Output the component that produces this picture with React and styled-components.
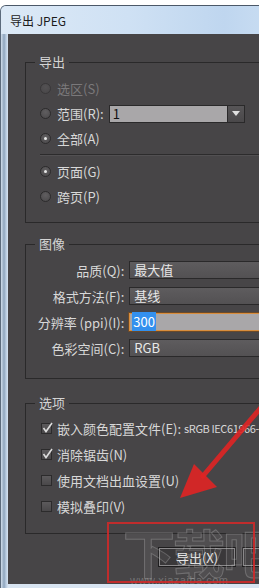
import React from "react";
import styled, { createGlobalStyle } from "styled-components";

const GlobalStyle = createGlobalStyle`
  html, body {
    margin: 0;
    padding: 0;
    background: #fff;
  }
  body {
    font-family: "Noto Sans CJK SC", "Noto Sans", sans-serif;
  }
`;

const Viewport = styled.div`
  position: relative;
  width: 259px;
  height: 588px;
  overflow: hidden;
  background: #fff;
`;

const Window = styled.div`
  box-sizing: border-box;
  margin-top: 5px;
  width: 320px;
  height: 583px;
  border-top: 1px solid #4b5868;
  border-left: 1px solid #5c6b7c;
  border-radius: 6px 0 0 0;
  background: linear-gradient(90deg, #b9cde3 0px, #8ea6c0 3px, #c6d7ea 6px);
  display: flex;
  flex-direction: column;
`;

const TitleBar = styled.div`
  height: 28px;
  display: flex;
  align-items: center;
  padding-left: 9px;
  border-radius: 5px 0 0 0;
  background: linear-gradient(90deg, #dce9f6 0%, #cfe1f4 40%, #bfd6ef 70%, #d3e4f5 100%);
  font-size: 12px;
  color: #1b1b1b;
`;

const FrameBody = styled.div`
  flex: 1;
  display: flex;
  padding: 0 0 4px 7px;
  background: linear-gradient(90deg, #d1deec 0px, #8fa5bd 3px, #b8cbe0 5px, #d8e4f1 7px);
`;

const Content = styled.div`
  position: relative;
  flex: 1;
  background: #474547;
  padding: 20px 0 0 17px;
  color: #d8d8d8;
  font-size: 13px;
  overflow: hidden;
`;

const Group = styled.fieldset`
  margin: ${(p) => p.$mt || 0}px 0 0 0;
  padding: 0;
  width: 300px;
  min-width: 0;
  border: 1px solid #2a292a;
`;

const Legend = styled.legend`
  margin-left: 9px;
  padding: 0 4px;
  font-size: 13px;
  line-height: 16px;
  color: #d4d4d4;
`;

const GroupBody = styled.div`
  padding: ${(p) => p.$pad};
`;

const Row = styled.div`
  height: ${(p) => p.$h || 25}px;
  display: flex;
  align-items: center;
  padding-left: ${(p) => p.$indent ?? 14}px;
  gap: ${(p) => p.$gap ?? 6}px;
  white-space: nowrap;
  color: ${(p) => (p.$disabled ? "#7b797b" : "#d8d8d8")};
`;

const Radio = styled.span`
  box-sizing: border-box;
  width: 11px;
  height: 11px;
  border-radius: 50%;
  border: 1px solid #2c2b2c;
  background: radial-gradient(circle at 50% 35%, #605e60, #4a484a);
  display: flex;
  align-items: center;
  justify-content: center;
  opacity: ${(p) => (p.$disabled ? 0.5 : 1)};
  &::after {
    content: "";
    width: 3px;
    height: 3px;
    border-radius: 50%;
    background: ${(p) => (p.$on ? "#e8e8e8" : "transparent")};
  }
`;

const Separator = styled.div`
  height: 1px;
  margin: 3px 0 4px 14px;
  background: #2c2b2c;
  box-shadow: 0 1px 0 #525052;
`;

const Combo = styled.div`
  box-sizing: border-box;
  display: flex;
  width: 136px;
  height: 18px;
  margin-left: -1px;
  border: 1px solid #2a292a;
`;

const ComboInput = styled.div`
  flex: 1;
  background: #a9a7a9;
  color: #111;
  font-size: 13px;
  line-height: 16px;
  padding-left: 3px;
`;

const ComboArrow = styled.div`
  width: 16px;
  border-left: 1px solid #2a292a;
  background: linear-gradient(#575557, #4a484a);
  display: flex;
  align-items: center;
  justify-content: center;
  &::after {
    content: "";
    border-left: 4px solid transparent;
    border-right: 4px solid transparent;
    border-top: 5px solid #e0e0e0;
  }
`;

const FieldRow = styled.div`
  height: 26px;
  display: flex;
  align-items: center;
  gap: 5px;
  white-space: nowrap;
`;

const FieldLabel = styled.div`
  width: 100px;
  text-align: right;
  color: #d8d8d8;
`;

const Field = styled.div`
  box-sizing: border-box;
  width: 200px;
  height: 18px;
  padding-left: 4px;
  line-height: 16px;
  border: 1px solid ${(p) => (p.$focus ? "#d88d3c" : "#2a292a")};
  box-shadow: ${(p) => (p.$focus ? "0 0 0 1px #6b4a2a" : "none")};
  background: ${(p) => (p.$focus ? "#a9a7a9" : "linear-gradient(#5e5c5e, #535153)")};
  color: #e8e8e8;
`;

const Selected = styled.span`
  background: #3390ee;
  color: #fff;
  padding: 0 1px;
  margin-left: -2px;
`;

const Check = styled.span`
  box-sizing: border-box;
  position: relative;
  width: 11px;
  height: 11px;
  margin-left: 1px;
  border: 1px solid #2c2b2c;
  background: linear-gradient(#5c5a5c, #4a484a);
  margin-right: 5px;
  flex-shrink: 0;
  svg {
    position: absolute;
    left: -1px;
    top: -3px;
  }
`;

const Profile = styled.span`
  margin-left: 3px;
  font-size: 11px;
  letter-spacing: -0.4px;
`;

const ButtonRow = styled.div`
  display: flex;
  gap: 6px;
  margin: 13px 0 0 133px;
`;

const Button = styled.div`
  box-sizing: border-box;
  width: 90px;
  height: 20px;
  display: flex;
  align-items: center;
  justify-content: center;
  border: 1px solid #1e1d1e;
  box-shadow: inset 0 0 0 1px #8a888a;
  background: #3a383a;
  color: #e4e4e4;
  font-size: 13px;
`;

const Watermark = styled.div`
  position: absolute;
  left: 115px;
  top: 488px;
  font-size: 52px;
  font-weight: 700;
  line-height: 60px;
  letter-spacing: -2px;
  color: rgba(255, 255, 255, 0.05);
  -webkit-text-stroke: 1px rgba(200, 200, 200, 0.3);
  pointer-events: none;
`;

const WatermarkUrl = styled.div`
  position: absolute;
  left: 122px;
  top: 540px;
  font-family: "Liberation Sans", sans-serif;
  font-size: 11px;
  color: rgba(220, 220, 220, 0.3);
  letter-spacing: 0.5px;
`;

const RedBox = styled.div`
  position: absolute;
  left: 107px;
  top: 522px;
  width: 148px;
  height: 61px;
  border: 2px solid rgba(214, 40, 40, 0.85);
  box-sizing: border-box;
`;

const Arrow = styled.svg`
  position: absolute;
  left: 0;
  top: 0;
`;

const CheckMark = () => (
  <svg width="13" height="13" viewBox="0 0 13 13">
    <path d="M2.5 7 L5 10.5 L11 2" stroke="#dcdcdc" strokeWidth="1.6" fill="none" />
  </svg>
);

const CheckRow = ({ checked, children }) => (
  <Row $h={26} $indent={14} $gap={0}>
    <Check>{checked && <CheckMark />}</Check>
    {children}
  </Row>
);

export default function App() {
  return (
    <Viewport>
      <GlobalStyle />
      <Window>
        <TitleBar>导出 JPEG</TitleBar>
        <FrameBody>
          <Content>
            <Group>
              <Legend>导出</Legend>
              <GroupBody $pad="6px 0 13px 0">
                <Row $disabled>
                  <Radio $disabled />
                  选区(S)
                </Row>
                <Row>
                  <Radio />
                  范围(R):
                  <Combo>
                    <ComboInput>1</ComboInput>
                    <ComboArrow />
                  </Combo>
                </Row>
                <Row>
                  <Radio $on />
                  全部(A)
                </Row>
                <Separator />
                <Row>
                  <Radio $on />
                  页面(G)
                </Row>
                <Row>
                  <Radio />
                  跨页(P)
                </Row>
              </GroupBody>
            </Group>

            <Group $mt={13}>
              <Legend>图像</Legend>
              <GroupBody $pad="5px 0 17px 0">
                <FieldRow>
                  <FieldLabel>品质(Q):</FieldLabel>
                  <Field>最大值</Field>
                </FieldRow>
                <FieldRow>
                  <FieldLabel>格式方法(F):</FieldLabel>
                  <Field>基线</Field>
                </FieldRow>
                <FieldRow>
                  <FieldLabel>分辨率 (ppi)(I):</FieldLabel>
                  <Field $focus>
                    <Selected>300</Selected>
                  </Field>
                </FieldRow>
                <FieldRow>
                  <FieldLabel>色彩空间(C):</FieldLabel>
                  <Field>RGB</Field>
                </FieldRow>
              </GroupBody>
            </Group>

            <Group $mt={16}>
              <Legend>选项</Legend>
              <GroupBody $pad="4px 0 14px 0">
                <CheckRow checked>
                  嵌入颜色配置文件(E):<Profile>sRGB IEC61966-2.1</Profile>
                </CheckRow>
                <CheckRow checked>消除锯齿(N)</CheckRow>
                <CheckRow>使用文档出血设置(U)</CheckRow>
                <CheckRow>模拟叠印(V)</CheckRow>
              </GroupBody>
            </Group>

            <ButtonRow>
              <Button>导出(X)</Button>
              <Button>取消</Button>
            </ButtonRow>

            <Watermark>下载吧</Watermark>
            <WatermarkUrl>www.xiazaiba.com</WatermarkUrl>
          </Content>
        </FrameBody>
      </Window>

      <RedBox />
      <Arrow width="259" height="588" viewBox="0 0 259 588">
        <path d="M264 404 L203 476" stroke="#e02424" strokeWidth="5" strokeLinecap="round" fill="none" opacity="0.9" />
        <polygon points="180,498 194,464 217,487" fill="#e02424" opacity="0.9" />
      </Arrow>
    </Viewport>
  );
}
